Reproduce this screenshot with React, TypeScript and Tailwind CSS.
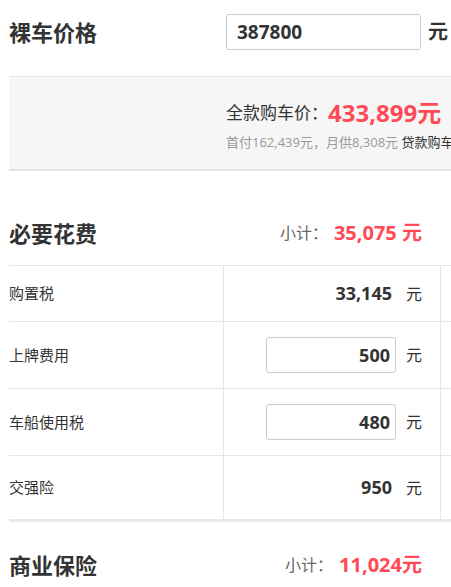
import React from 'react';

const rows = [
  { label: '购置税', value: '33,145', editable: false, h: 'h-[56px]' },
  { label: '上牌费用', value: '500', editable: true, h: 'h-[67px]' },
  { label: '车船使用税', value: '480', editable: true, h: 'h-[67px]' },
  { label: '交强险', value: '950', editable: false, h: 'h-[63px]' },
];

function SectionHead({ title, total, top }: { title: string; total: string; top: string }) {
  return (
    <div className={`flex w-[431px] items-center justify-between pr-[18px] pb-[17px] ${top}`}>
      <h2 className="text-[22px] leading-[30px] font-bold text-[#333]">{title}</h2>
      <div className="flex items-center">
        <span className="mr-[6px] text-[16px] text-[#666]">小计：</span>
        <span className="text-[20px] font-bold text-[#ff4a55]">{total}</span>
      </div>
    </div>
  );
}

export default function App() {
  return (
    <div
      className="h-[587px] w-[451px] overflow-hidden bg-white"
      style={{ fontFamily: '"Open Sans", "Noto Sans CJK SC", sans-serif' }}
    >
      <div className="w-[600px] pl-[9px]">
        {/* 裸车价格 */}
        <div className="flex items-center pt-[14px] pb-[26px]">
          <h1 className="w-[217px] text-[22px] font-bold text-[#333]">裸车价格</h1>
          <input
            defaultValue="387800"
            className="h-[36px] w-[195px] rounded-[3px] border border-[#ccc] px-[10px] text-[19px] font-bold text-[#333] outline-none"
          />
          <span className="ml-[7px] text-[20px] font-bold text-[#333]">元</span>
        </div>

        {/* 全款购车价 */}
        <div className="border-t border-b-2 border-[#e5e5e5] bg-[#f6f6f6] pl-[217px] pt-[21px] pb-[17px] whitespace-nowrap">
          <div className="flex h-[30px] items-center">
            <span className="text-[17px] text-[#333]">全款购车价：</span>
            <span className="text-[24px] font-bold text-[#ff4a55]">433,899元</span>
          </div>
          <div className="mt-[4px] h-[20px] text-[13px] leading-[20px] text-[#999]">
            首付162,439元，月供8,308元 <span className="text-[#333]">贷款购车计算器</span>
          </div>
        </div>

        <SectionHead title="必要花费" total="35,075 元" top="pt-[47px]" />

        {/* 必要花费 table */}
        <div className="border-t border-b-[3px] border-t-[#e5e5e5] border-b-[#e8e8e8]">
          {rows.map((r, i) => (
            <div
              key={r.label}
              className={`grid grid-cols-[215px_217px_1fr] ${r.h} ${i < rows.length - 1 ? 'border-b border-[#e5e5e5]' : ''}`}
            >
              <div className="flex items-center border-r border-[#e5e5e5] text-[15px] text-[#333]">{r.label}</div>
              <div className="flex items-center justify-end border-r border-[#e5e5e5] pr-[18px]">
                {r.editable ? (
                  <input
                    defaultValue={r.value}
                    className="h-[36px] w-[130px] rounded-[3px] border border-[#ccc] pr-[5px] text-right text-[18px] font-bold text-[#333] outline-none"
                  />
                ) : (
                  <div className="w-[130px] pr-[4px] text-right text-[18px] font-bold text-[#333]">{r.value}</div>
                )}
                <span className="ml-[10px] text-[16px] text-[#333]">元</span>
              </div>
              <div />
            </div>
          ))}
        </div>

        <SectionHead title="商业保险" total="11,024元" top="pt-[28px]" />
      </div>
    </div>
  );
}
